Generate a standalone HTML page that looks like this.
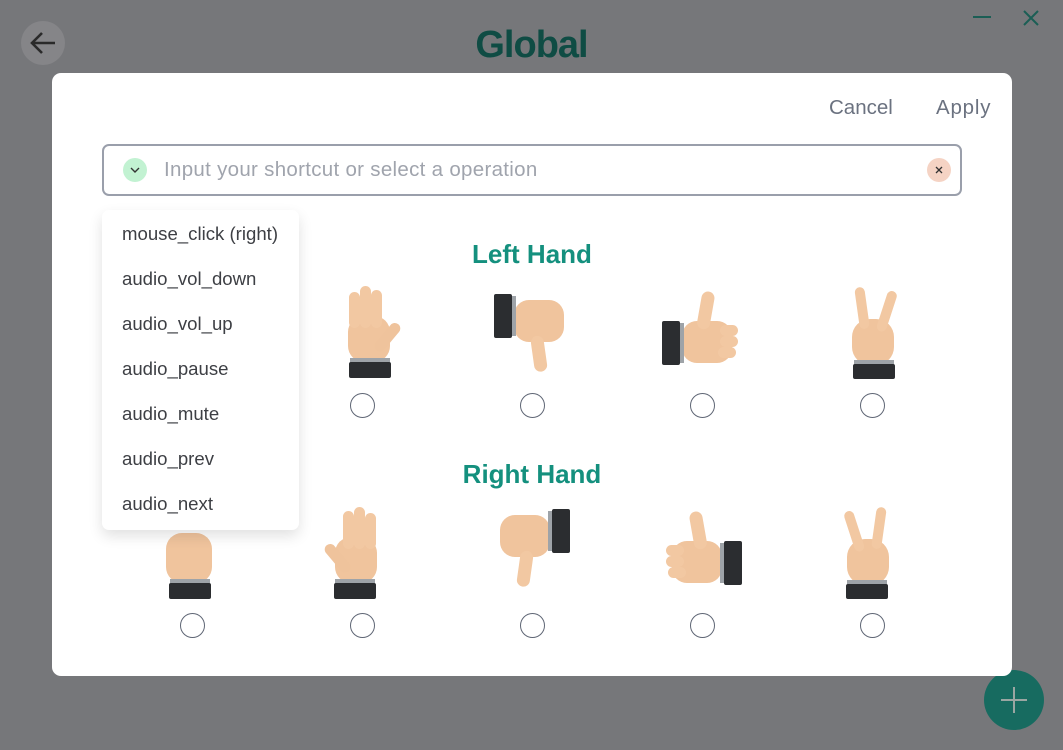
<!DOCTYPE html>
<html><head><meta charset="utf-8"><style>
*{margin:0;padding:0;box-sizing:border-box}
body{width:1063px;height:750px;background:#76777a;font-family:"Liberation Sans",sans-serif;position:relative;overflow:hidden}
.abs{position:absolute}
.modal{left:52px;top:73px;width:960px;height:603px;background:#fff;border-radius:9px}
.btn{font-size:20.5px;color:#6b7280}
.input{left:102px;top:144px;width:860px;height:52px;border:2px solid #9a9fab;border-radius:7px}
.ph{left:164px;top:158px;font-size:20.5px;color:#a0a4ad;letter-spacing:.3px}
.h{font-size:26px;font-weight:bold;color:#14907e;width:960px;text-align:center;left:52px}
.radio{width:25px;height:25px;border:1.5px solid #5f6675;border-radius:50%;background:#fff}
.dd{left:102px;top:210px;width:197px;height:320px;background:#fff;border-radius:7px;box-shadow:0 6px 14px rgba(0,0,0,.12)}
.dd div{position:absolute;left:20px;font-size:18.6px;color:#3d3f44}
</style></head><body>
<div class="abs" style="left:21px;top:21px;width:44px;height:44px;border-radius:50%;background:#858588"></div>
<svg class="abs" style="left:28px;top:30px" width="30" height="26" viewBox="0 0 30 26"><path d="M27 13H4M14 3L4 13l10 10" fill="none" stroke="#2a2a2a" stroke-width="2.6"/></svg>
<div class="abs" style="left:0;width:1063px;top:24px;text-align:center;font-size:38px;font-weight:bold;color:#0f4c44;letter-spacing:-1px">Global</div>
<svg class="abs" style="left:972px;top:10px" width="20" height="14"><path d="M1 7h18" stroke="#1b5e55" stroke-width="2"/></svg>
<svg class="abs" style="left:1022px;top:9px" width="18" height="18"><path d="M2 2l14 14M16 2L2 16" stroke="#1b5e55" stroke-width="2"/></svg>
<div class="abs" style="left:984px;top:670px;width:60px;height:60px;border-radius:50%;background:#176b60"></div>
<svg class="abs" style="left:999px;top:685px" width="30" height="30"><path d="M15 2v26M2 15h26" stroke="#9aa6a2" stroke-width="2"/></svg>
<div class="abs modal"></div>
<div class="abs btn" style="left:829px;top:96px">Cancel</div>
<div class="abs btn" style="left:936px;top:96px;letter-spacing:.8px">Apply</div>
<div class="abs input"></div>
<div class="abs" style="left:123px;top:158px;width:24px;height:24px;border-radius:50%;background:#c2f2d2"></div>
<svg class="abs" style="left:129px;top:165px" width="12" height="10"><path d="M2 3l4 4 4-4" fill="none" stroke="#333" stroke-width="1.4"/></svg>
<div class="abs ph">Input your shortcut or select a operation</div>
<div class="abs" style="left:927px;top:158px;width:24px;height:24px;border-radius:50%;background:#f5d3c4"></div>
<svg class="abs" style="left:933px;top:164px" width="12" height="12"><path d="M3 3l6 6M9 3l-6 6" stroke="#333" stroke-width="1.3"/></svg>
<div class="abs h" style="top:239px">Left Hand</div>
<div class="abs h" style="top:459px">Right Hand</div>

<svg class="abs" style="left:0;top:0" width="1063" height="750">
<defs>
<g id="open"><rect x="-22" y="-14" width="42" height="46" rx="16" fill="#f0c49d"/>
<rect x="-21" y="-38" width="11" height="36" rx="5.5" fill="#f2c8a2"/><rect x="-10" y="-44" width="11" height="42" rx="5.5" fill="#f2c8a2"/><rect x="1" y="-40" width="11" height="38" rx="5.5" fill="#f2c8a2"/>
<rect x="12" y="-10" width="11" height="34" rx="5.5" transform="rotate(40 17 7)" fill="#efc39c"/>
<rect x="-20" y="28" width="40" height="5" fill="#9ea3a8"/><rect x="-21" y="32" width="42" height="16" rx="2" fill="#2b2d30"/></g>
<g id="vic"><rect x="-20" y="-14" width="42" height="46" rx="18" fill="#f0c49d"/>
<rect x="-12" y="-46" width="10" height="42" rx="5" fill="#f2c8a2" transform="rotate(-8 -8 -4)"/><rect x="4" y="-44" width="10" height="42" rx="5" fill="#f2c8a2" transform="rotate(18 8 -4)"/>
<rect x="-18" y="27" width="40" height="5" fill="#9ea3a8"/><rect x="-19" y="31" width="42" height="15" rx="2" fill="#2b2d30"/></g>
<g id="up"><rect x="-18" y="-14" width="50" height="42" rx="15" fill="#f0c49d"/>
<rect x="-4" y="-44" width="13" height="38" rx="6.5" fill="#f2c8a2" transform="rotate(10 2 -6)"/>
<rect x="20" y="-10" width="18" height="11" rx="5.5" fill="#f2c8a2"/><rect x="20" y="1" width="18" height="11" rx="5.5" fill="#f2c8a2"/><rect x="18" y="12" width="18" height="11" rx="5.5" fill="#f2c8a2"/>
<rect x="-21" y="-12" width="5" height="40" fill="#9ea3a8"/><rect x="-38" y="-14" width="18" height="44" rx="2" fill="#2b2d30"/></g>
<g id="down"><rect x="-18" y="-32" width="50" height="42" rx="15" fill="#f0c49d"/>
<rect x="-2" y="4" width="13" height="36" rx="6.5" fill="#f2c8a2" transform="rotate(-8 4 4)"/>
<rect x="-21" y="-36" width="5" height="40" fill="#9ea3a8"/><rect x="-38" y="-38" width="18" height="44" rx="2" fill="#2b2d30"/></g>
<g id="fist"><rect x="-24" y="-30" width="46" height="50" rx="16" fill="#f0c49d"/>
<rect x="-20" y="16" width="40" height="5" fill="#9ea3a8"/><rect x="-21" y="20" width="42" height="16" rx="2" fill="#2b2d30"/></g>
</defs>
<use href="#open" x="370" y="330"/>
<use href="#down" x="532" y="332"/>
<use href="#up" x="700" y="335"/>
<use href="#vic" x="872" y="333"/>
<use href="#fist" x="190" y="563"/>
<use href="#open" transform="translate(355 551) scale(-1 1)"/>
<use href="#down" transform="translate(532 547) scale(-1 1)"/>
<use href="#up" transform="translate(704 555) scale(-1 1)"/>
<use href="#vic" transform="translate(869 553) scale(-1 1)"/>
</svg>

<div class="abs radio" style="left:350px;top:393px"></div>
<div class="abs radio" style="left:520px;top:393px"></div>
<div class="abs radio" style="left:690px;top:393px"></div>
<div class="abs radio" style="left:860px;top:393px"></div>
<div class="abs radio" style="left:180px;top:613px"></div>
<div class="abs radio" style="left:350px;top:613px"></div>
<div class="abs radio" style="left:520px;top:613px"></div>
<div class="abs radio" style="left:690px;top:613px"></div>
<div class="abs radio" style="left:860px;top:613px"></div>

<div class="abs dd">
<div style="top:13px">mouse_click (right)</div>
<div style="top:58px">audio_vol_down</div>
<div style="top:103px">audio_vol_up</div>
<div style="top:148px">audio_pause</div>
<div style="top:193px">audio_mute</div>
<div style="top:238px">audio_prev</div>
<div style="top:283px">audio_next</div>
</div>
</body></html>
